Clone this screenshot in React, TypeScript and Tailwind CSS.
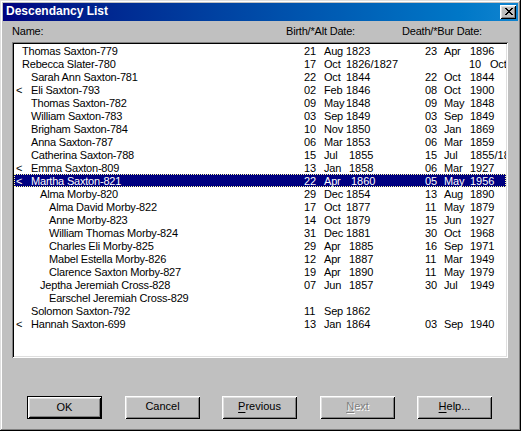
import React from "react";

type Row = {
  m?: boolean;
  l: number;
  n: string;
  b?: [string, string, string, number];
  d?: [string, string, string];
  sel?: boolean;
  special?: boolean;
};

const rows: Row[] = [
  { l: 0, n: "Thomas Saxton-779", b: ["21", "Aug", "1823", 22], d: ["23", "Apr", "1896"] },
  { l: 0, n: "Rebecca Slater-780", b: ["17", "Oct", "1826/1827", 22], special: true },
  { l: 1, n: "Sarah Ann Saxton-781", b: ["22", "Oct", "1844", 22], d: ["22", "Oct", "1844"] },
  { m: true, l: 1, n: "Eli Saxton-793", b: ["02", "Feb", "1846", 22], d: ["08", "Oct", "1900"] },
  { l: 1, n: "Thomas Saxton-782", b: ["09", "May", "1848", 22], d: ["09", "May", "1848"] },
  { l: 1, n: "William Saxton-783", b: ["03", "Sep", "1849", 22], d: ["03", "Sep", "1849"] },
  { l: 1, n: "Brigham Saxton-784", b: ["10", "Nov", "1850", 22], d: ["03", "Jan", "1869"] },
  { l: 1, n: "Anna Saxton-787", b: ["06", "Mar", "1853", 22], d: ["06", "Mar", "1859"] },
  { l: 1, n: "Catherina Saxton-788", b: ["15", "Jul", "1855", 25], d: ["15", "Jul", "1855/1856"] },
  { m: true, l: 1, n: "Emma Saxton-809", b: ["13", "Jan", "1858", 25], d: ["06", "Mar", "1927"] },
  { m: true, l: 1, n: "Martha Saxton-821", b: ["22", "Apr", "1860", 27], d: ["05", "May", "1956"], sel: true },
  { l: 2, n: "Alma Morby-820", b: ["29", "Dec", "1854", 22], d: ["13", "Aug", "1890"] },
  { l: 3, n: "Alma David Morby-822", b: ["17", "Oct", "1877", 22], d: ["11", "May", "1879"] },
  { l: 3, n: "Anne Morby-823", b: ["14", "Oct", "1879", 22], d: ["15", "Jun", "1927"] },
  { l: 3, n: "William Thomas Morby-824", b: ["31", "Dec", "1881", 22], d: ["30", "Oct", "1968"] },
  { l: 3, n: "Charles Eli Morby-825", b: ["29", "Apr", "1885", 25], d: ["16", "Sep", "1971"] },
  { l: 3, n: "Mabel Estella Morby-826", b: ["12", "Apr", "1887", 25], d: ["11", "Mar", "1949"] },
  { l: 3, n: "Clarence Saxton Morby-827", b: ["19", "Apr", "1890", 25], d: ["11", "May", "1979"] },
  { l: 2, n: "Jeptha Jeremiah Cross-828", b: ["07", "Jun", "1857", 25], d: ["30", "Jul", "1949"] },
  { l: 3, n: "Earschel Jeremiah Cross-829" },
  { l: 1, n: "Solomon Saxton-792", b: ["11", "Sep", "1862", 22] },
  { m: true, l: 1, n: "Hannah Saxton-699", b: ["13", "Jan", "1864", 22], d: ["03", "Sep", "1940"] },
];

const indent = ["pl-0", "pl-[9px]", "pl-[18px]", "pl-[27px]"];
const monthW: Record<number, string> = {
  22: "w-[22px]",
  25: "w-[25px]",
  27: "w-[27px]",
};

const btnBevel =
  "shadow-[inset_1px_1px_#ffffff,inset_-1px_-1px_#000000,inset_2px_2px_#dfdfdf,inset_-2px_-2px_#808080]";

function Btn({
  children,
  def,
  className = "",
}: {
  children: React.ReactNode;
  def?: boolean;
  className?: string;
}) {
  if (def) {
    return (
      <div className={`w-[75px] h-[23px] border border-black bg-[#c0c0c0] ${className}`}>
        <div className={`w-full h-full flex items-center justify-center pb-[1px] ${btnBevel}`}>
          {children}
        </div>
      </div>
    );
  }
  return (
    <div
      className={`w-[75px] h-[23px] bg-[#c0c0c0] flex items-center justify-center pb-[2px] ${btnBevel} ${className}`}
    >
      {children}
    </div>
  );
}

function CloseGlyph() {
  const px = [
    [0, 0], [1, 0], [6, 0], [7, 0],
    [1, 1], [2, 1], [5, 1], [6, 1],
    [2, 2], [3, 2], [4, 2], [5, 2],
    [3, 3], [4, 3],
    [2, 4], [3, 4], [4, 4], [5, 4],
    [1, 5], [2, 5], [5, 5], [6, 5],
    [0, 6], [1, 6], [6, 6], [7, 6],
  ];
  return (
    <svg width="8" height="7" viewBox="0 0 8 7" shapeRendering="crispEdges">
      {px.map(([x, y], i) => (
        <rect key={i} x={x} y={y} width="1" height="1" fill="#000" />
      ))}
    </svg>
  );
}

export default function App() {
  return (
    <div className="w-[521px] h-[431px] bg-[#c0c0c0] p-[3px] flex flex-col font-['Liberation_Sans',Arial,sans-serif] text-[11px] text-black shadow-[inset_-1px_-1px_#000000,inset_1px_1px_#dfdfdf,inset_-2px_-2px_#808080,inset_2px_2px_#ffffff] overflow-hidden">
      {/* Title bar */}
      <div className="h-[18px] flex items-start justify-between bg-linear-to-r from-[#000080] to-[#1084d0]">
        <span className="pl-[3px] text-[12px] font-bold leading-[16px] text-white whitespace-nowrap">
          Descendancy List
        </span>
        <div className={`mt-[2px] mr-[2px] w-[16px] h-[14px] bg-[#c0c0c0] flex items-center justify-center pl-[1px] pb-[1px] ${btnBevel}`}>
          <CloseGlyph />
        </div>
      </div>

      {/* Column labels */}
      <div className="mt-[4px] mb-[4px] h-[13px] leading-[13px] flex pl-[9px] whitespace-nowrap tracking-[-0.2px]">
        <span className="w-[274px]">Name:</span>
        <span className="w-[116px]">Birth/*Alt Date:</span>
        <span>Death/*Bur Date:</span>
      </div>

      {/* List box */}
      <div className="ml-[9px] w-[496px] h-[316px] bg-white p-[2px] shadow-[inset_1px_1px_#808080,inset_-1px_-1px_#ffffff,inset_2px_2px_#000000,inset_-2px_-2px_#dfdfdf]">
        <div className="w-full h-full overflow-hidden flex flex-col">
          {rows.map((r, i) => (
            <div
              key={i}
              className={`h-[13px] leading-[15px] flex shrink-0 whitespace-nowrap ${
                r.sel
                  ? "bg-[#000080] text-white outline-1 outline-dotted outline-[#ffffa0] -outline-offset-1"
                  : ""
              }`}
            >
              <span className="w-[8px] pl-[2px] shrink-0">{r.m ? "<" : ""}</span>
              <span className={`w-[282px] shrink-0 tracking-[-0.2px] ${indent[r.l]}`}>{r.n}</span>
              <span className="w-[121px] shrink-0 flex">
                {r.b && (
                  <>
                    <span className="w-[20px] shrink-0">{r.b[0]}</span>
                    <span className={`${monthW[r.b[3]]} shrink-0 tracking-[-0.2px]`}>{r.b[1]}</span>
                    <span>{r.b[2]}</span>
                  </>
                )}
              </span>
              <span className="flex shrink-0">
                {r.special ? (
                  <>
                    <span className="w-[44px] shrink-0" />
                    <span className="w-[21px] shrink-0">10</span>
                    <span className="tracking-[-0.2px]">Oct 1826/1827</span>
                  </>
                ) : (
                  r.d && (
                    <>
                      <span className="w-[19px] shrink-0">{r.d[0]}</span>
                      <span className="w-[26px] shrink-0 tracking-[-0.2px]">{r.d[1]}</span>
                      <span>{r.d[2]}</span>
                    </>
                  )
                )}
              </span>
            </div>
          ))}
        </div>
      </div>

      {/* Buttons */}
      <div className="mt-[38px] flex pl-[24px]">
        <Btn def>OK</Btn>
        <Btn className="ml-[23px]">Cancel</Btn>
        <Btn className="ml-[22px]">
          <span>
            <span className="underline underline-offset-[2px]">P</span>revious
          </span>
        </Btn>
        <Btn className="ml-[23px]">
          <span className="text-[#808080] [text-shadow:1px_1px_0_#ffffff]">
            <span className="underline underline-offset-[2px]">N</span>ext
          </span>
        </Btn>
        <Btn className="ml-[22px]">
          <span>
            <span className="underline underline-offset-[2px]">H</span>elp...
          </span>
        </Btn>
      </div>
    </div>
  );
}
